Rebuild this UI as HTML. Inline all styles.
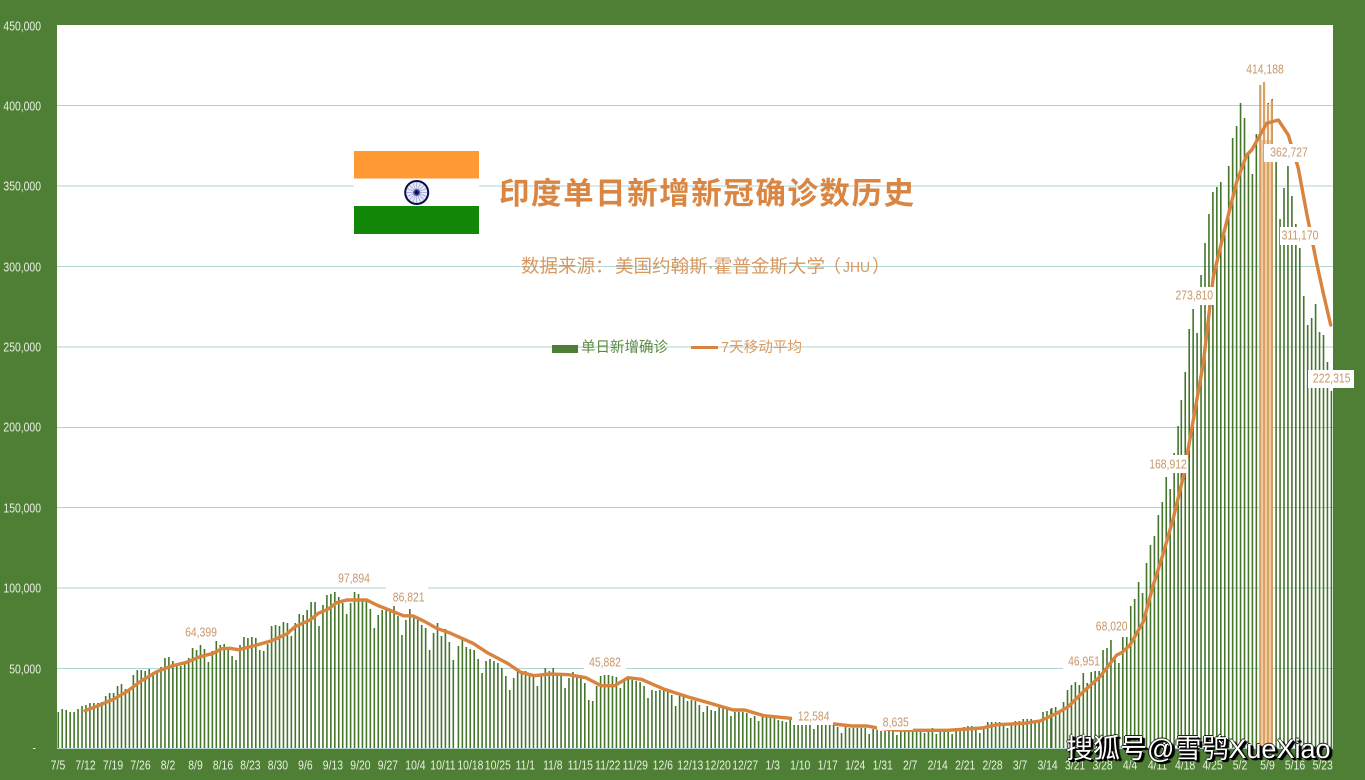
<!DOCTYPE html>
<html lang="zh">
<head>
<meta charset="utf-8">
<title>印度单日新增新冠确诊数历史</title>
<style>
html,body{margin:0;padding:0;background:#4f7f35;width:1365px;height:780px;overflow:hidden}
svg{position:absolute;left:0;top:0;display:block}
text{font-family:"Liberation Sans","Noto Sans CJK SC",sans-serif}
.a text{font-size:13px;fill:#e8f0e0;text-anchor:middle}
.y text{font-size:13px;fill:#e8f0e0;text-anchor:end}
.d text{font-size:13px;fill:#c8976a;text-anchor:middle}
#wm{position:absolute;left:1066px;top:731px;font:27px/36px "Liberation Sans","Noto Sans CJK SC",sans-serif;color:#fff;white-space:nowrap;text-shadow:1px 1px 0 #000,2px 2px 0 #000,3px 2px 1px #000,-1px 0 0 #222,0 -1px 0 #222}
</style>
</head>
<body>
<svg width="1365" height="780" viewBox="0 0 1365 780" xmlns="http://www.w3.org/2000/svg">
<rect x="57" y="25" width="1276" height="724" fill="#fff"/>
<path d="M57 105.5H1333M57 186H1333M57 266.5H1333M57 347H1333M57 427.5H1333M57 507.5H1333M57 588H1333M57 668.5H1333M57 748.5H1333" stroke="#b0d4d0" stroke-width="1" fill="none"/>
<path fill="none" stroke="#44752b" stroke-width="1.6" d="M58.3 712V748m3.95-39V748m3.95-38V748m3.95-36V748m3.95-36V748m3.95-39V748m3.95-42V748m3.95-43V748m3.95-45V748m3.95-45V748m3.95-45V748m3.95-46V748m3.95-52V748m3.95-55V748m3.95-55V748m3.95-62V748m3.95-64V748m3.95-59V748m3.95-60V748m3.95-73V748m3.95-78V748m3.95-78V748m3.95-77V748m3.95-79V748m3.95-76V748m3.95-75V748m3.95-81V748m3.95-90V748m3.95-91V748m3.95-87V748m3.95-82V748m3.95-82V748m3.95-85V748m3.95-90V748m3.95-100V748m3.95-98V748m3.95-103V748m3.95-99V748m3.95-86V748m3.95-97V748m3.95-107V748m3.95-103V748m3.95-104V748m3.95-100V748m3.95-92V748m3.95-88V748m3.95-103V748m3.95-111V748m3.95-110V748m3.95-111V748m3.95-110V748m3.95-98V748m3.95-97V748m3.95-104V748m3.95-122V748m3.95-123V748m3.95-122V748m3.95-126V748m3.95-125V748m3.95-112V748m3.95-125V748m3.95-134V748m3.95-133V748m3.95-138V748m3.95-146V748m3.95-146V748m3.95-122V748m3.95-143V748m3.95-153V748m3.95-154V748m3.95-156V748m3.95-151V748m3.95-145V748m3.95-134V748m3.95-145V748m3.95-156V748m3.95-154V748m3.95-147V748m3.95-149V748m3.95-139V748m3.95-120V748m3.95-133V748m3.95-138V748m3.95-138V748m3.95-136V748m3.95-142V748m3.95-132V748m3.95-113V748m3.95-128V748m3.95-139V748m3.95-130V748m3.95-128V748m3.95-123V748m3.95-120V748m3.95-98V748m3.95-115V748m3.95-125V748m3.95-112V748m3.95-119V748m3.95-106V748m3.95-88V748
M458.4 646V748m3.95-108V748m3.95-101V748m3.95-99V748m3.95-98V748m3.95-89V748m3.95-75V748m3.95-87V748m3.95-89V748m3.95-87V748m3.95-85V748m3.95-80V748m3.95-72V748m3.95-58V748m3.95-70V748m3.95-77V748m3.95-77V748m3.95-77V748m3.95-72V748m3.95-72V748m3.95-62V748m3.95-72V748m3.95-80V748m3.95-77V748m3.95-80V748m3.95-75V748m3.95-74V748m3.95-60V748m3.95-70V748m3.95-76V748m3.95-71V748m3.95-70V748m3.95-65V748m3.95-48V748m3.95-47V748m3.95-62V748m3.95-72V748m3.95-73V748m3.95-73V748m3.95-72V748m3.95-71V748m3.95-60V748m3.95-67V748m3.95-71V748m3.95-68V748m3.95-67V748m3.95-66V748m3.95-62V748m3.95-50V748m3.95-58V748m3.95-57V748m3.95-58V748m3.95-58V748m3.95-57V748m3.95-53V748m3.95-42V748m3.95-52V748m3.95-51V748m3.95-47V748m3.95-48V748m3.95-47V748m3.95-43V748m3.95-36V748m3.95-42V748m3.95-38V748m3.95-37V748m3.95-42V748m3.95-41V748m3.95-40V748m3.95-32V748m3.95-36V748m3.95-36V748m3.95-36V748m3.95-35V748m3.95-30V748m3.95-32V748m3.95-27V748m3.95-32V748m3.95-32V748m3.95-31V748m3.95-30V748m3.95-28V748m3.95-27V748m3.95-26V748m3.95-28V748m3.95-23V748m3.95-23V748m3.95-23V748m3.95-23V748m3.95-23V748m3.95-19V748m3.95-23V748m3.95-23V748m3.95-23V748m3.95-23V748m3.95-23V748m3.95-21V748m3.95-15V748m3.95-21V748m3.95-20V748m3.95-20V748m3.95-20V748m3.95-20V748m3.95-20V748m3.95-14V748m3.95-19V748m3.95-20V748m3.95-17V748m3.95-17V748m3.95-17V748m3.95-17V748m3.95-13V748m3.95-17V748m3.95-18V748m3.95-18V748m3.95-18V748m3.95-18V748m3.95-18V748m3.95-15V748m3.95-17V748m3.95-20V748m3.95-14V748m3.95-17V748m3.95-17V748m3.95-17V748m3.95-14V748m3.95-20V748m3.95-20V748m3.95-21V748m3.95-22V748m3.95-22V748m3.95-20V748m3.95-15V748m3.95-22V748m3.95-26V748m3.95-26V748m3.95-26V748m3.95-26V748m3.95-23V748m3.95-20V748m3.95-23V748m3.95-27V748m3.95-27V748m3.95-29V748m3.95-29V748m3.95-29V748m3.95-27V748m3.95-28V748m3.95-36V748m3.95-37V748m3.95-39V748
M1051.7 708V748m3.95-41V748m3.95-35V748m3.95-46V748m3.95-58V748m3.95-63V748m3.95-66V748m3.95-63V748m3.95-75V748m3.95-65V748m3.95-76V748m3.95-79V748m3.95-79V748m3.95-98V748m3.95-100V748m3.95-108V748m3.95-90V748m3.95-85V748m3.95-112V748m3.95-112V748m3.95-142V748m3.95-149V748m3.95-166V748m3.95-155V748m3.95-185V748m3.95-203V748m3.95-212V748m3.95-233V748m3.95-246V748m3.95-271V748m3.95-259V748m3.95-295V748m3.95-322V748
M1181.3 400V748m3.95-376V748m3.95-419V748m3.95-439V748m3.95-415V748m3.95-473V748m3.95-505V748m3.95-534V748m3.95-556V748m3.95-561V748m3.95-566V748m3.95-513V748m3.95-582V748m3.95-610V748m3.95-622V748m3.95-645V748m3.95-630V748m3.95-595V748m3.95-574V748m3.95-614V748m3.95-663V748m3.95-666V748m3.95-645V748m3.95-649V748m3.95-589V748m3.95-529V748m3.95-560V748m3.95-582V748m3.95-552V748m3.95-524V748m3.95-500V748m3.95-452V748m3.95-423V748m3.95-430V748m3.95-444V748m3.95-416V748m3.95-413V748m3.95-386V748m3.95-357V748"/>
<rect x="1259" y="140" width="13.5" height="608" fill="#f3d4ad"/>
<path d="M1260.2 85V748M1264 82V748M1268 104V748M1271.8 100V748" stroke="#d9a264" stroke-width="2.2" fill="none"/>
<path fill="none" stroke="#d8843f" stroke-width="3.4" stroke-linejoin="round" stroke-linecap="round" d="M85 710.7L100 705 113.3 699.3 126.7 691.7 140 681.7 156.7 671.7 171.7 666 186.7 662.3 200 656.7 213.3 653.3 221.7 648.7 230 648.3 238.3 649.7 253.3 646 271.7 640.7 286.7 634 295 626.7 310 620 318.3 613.3 328.3 609 336.7 602.7 346.7 600 366.7 600 376.7 605 391.7 611 403.3 615.7 413.3 616 425 621.7 436.7 628.3 450 633 473 643.3 488.3 653.3 507.4 663.3 520.8 672.3 534.2 675.7 549.5 674 568.6 674.7 585.9 677.7 601.2 685.7 614.6 685.7 628 677.7 641.4 679.3 664.3 689.3 687.3 696.7 710.2 703.3 733.2 710 744.7 710 763.8 715.7 790.6 718.3 812 721 833.9 724 851.8 726 867.1 726 876 727.7 895 730 913 730.3 947.5 730.3 982 728 997.3 724.7 1024 723.3 1040 721 1056.7 713.3 1068.3 706.7 1083.3 691.7 1100 676.7 1116.7 655 1121.7 652.7 1130 645 1143.3 621.7 1153.3 585 1163.3 553.3 1173.3 518.3 1183.3 476.7 1193.3 420 1203.3 363.3 1213.3 276.7 1223.3 235 1236.7 181.7 1246.7 155 1251.7 150 1266.7 123.3 1278.3 120 1288.3 135 1298.3 168.3 1306.7 213.3 1316.7 263.3 1323.3 293.3 1330.7 325"/>
<g fill="#fff">
<rect x="386" y="586" width="42" height="20"/>
<rect x="584" y="651" width="42" height="21"/>
<rect x="792" y="705" width="41" height="20"/>
<rect x="877" y="711" width="36" height="19"/>
<rect x="1063" y="650" width="39" height="21"/>
<rect x="1092" y="616" width="38" height="21"/>
<rect x="1148" y="455" width="40" height="18"/>
<rect x="1175" y="287" width="40" height="18"/>
<rect x="1264" y="144" width="44" height="18"/>
<rect x="1280" y="227" width="40" height="18"/>
<rect x="1308" y="370" width="46" height="18"/>
</g>
<g class="d">
<text transform="translate(201 636.5) scale(.8 1)">64,399</text>
<text transform="translate(354 582.5) scale(.8 1)">97,894</text>
<text transform="translate(408.7 601.5) scale(.8 1)">86,821</text>
<text transform="translate(605 666.5) scale(.8 1)">45,882</text>
<text transform="translate(813.6 720.5) scale(.8 1)">12,584</text>
<text transform="translate(895.8 726.5) scale(.8 1)">8,635</text>
<text transform="translate(1084 665.5) scale(.8 1)">46,951</text>
<text transform="translate(1111.7 630.5) scale(.8 1)">68,020</text>
<text transform="translate(1168 468.5) scale(.8 1)">168,912</text>
<text transform="translate(1194.3 299.5) scale(.8 1)">273,810</text>
<text transform="translate(1265 73.5) scale(.8 1)">414,188</text>
<text transform="translate(1289 156.5) scale(.8 1)">362,727</text>
<text transform="translate(1300 239.5) scale(.8 1)">311,170</text>
<text transform="translate(1331.7 382.5) scale(.8 1)">222,315</text>
</g>
<g class="y">
<text transform="translate(41 30.5) scale(.8 1)">450,000</text>
<text transform="translate(41 110.5) scale(.8 1)">400,000</text>
<text transform="translate(41 190.5) scale(.8 1)">350,000</text>
<text transform="translate(41 271.5) scale(.8 1)">300,000</text>
<text transform="translate(41 351.5) scale(.8 1)">250,000</text>
<text transform="translate(41 431.5) scale(.8 1)">200,000</text>
<text transform="translate(41 512.5) scale(.8 1)">150,000</text>
<text transform="translate(41 592.5) scale(.8 1)">100,000</text>
<text transform="translate(41 673.5) scale(.8 1)">50,000</text>
<text transform="translate(36 752) scale(.8 1)">-</text>
</g>
<g class="a">
<text transform="translate(58 769.5) scale(.8 1)">7/5</text>
<text transform="translate(85.5 769.5) scale(.8 1)">7/12</text>
<text transform="translate(113 769.5) scale(.8 1)">7/19</text>
<text transform="translate(140.5 769.5) scale(.8 1)">7/26</text>
<text transform="translate(168 769.5) scale(.8 1)">8/2</text>
<text transform="translate(195.5 769.5) scale(.8 1)">8/9</text>
<text transform="translate(223 769.5) scale(.8 1)">8/16</text>
<text transform="translate(250.4 769.5) scale(.8 1)">8/23</text>
<text transform="translate(277.9 769.5) scale(.8 1)">8/30</text>
<text transform="translate(305.4 769.5) scale(.8 1)">9/6</text>
<text transform="translate(332.9 769.5) scale(.8 1)">9/13</text>
<text transform="translate(360.4 769.5) scale(.8 1)">9/20</text>
<text transform="translate(387.9 769.5) scale(.8 1)">9/27</text>
<text transform="translate(415.4 769.5) scale(.8 1)">10/4</text>
<text transform="translate(442.9 769.5) scale(.8 1)">10/11</text>
<text transform="translate(470.4 769.5) scale(.8 1)">10/18</text>
<text transform="translate(497.8 769.5) scale(.8 1)">10/25</text>
<text transform="translate(525.3 769.5) scale(.8 1)">11/1</text>
<text transform="translate(552.8 769.5) scale(.8 1)">11/8</text>
<text transform="translate(580.3 769.5) scale(.8 1)">11/15</text>
<text transform="translate(607.8 769.5) scale(.8 1)">11/22</text>
<text transform="translate(635.3 769.5) scale(.8 1)">11/29</text>
<text transform="translate(662.8 769.5) scale(.8 1)">12/6</text>
<text transform="translate(690.3 769.5) scale(.8 1)">12/13</text>
<text transform="translate(717.8 769.5) scale(.8 1)">12/20</text>
<text transform="translate(745.2 769.5) scale(.8 1)">12/27</text>
<text transform="translate(772.7 769.5) scale(.8 1)">1/3</text>
<text transform="translate(800.2 769.5) scale(.8 1)">1/10</text>
<text transform="translate(827.7 769.5) scale(.8 1)">1/17</text>
<text transform="translate(855.2 769.5) scale(.8 1)">1/24</text>
<text transform="translate(882.7 769.5) scale(.8 1)">1/31</text>
<text transform="translate(910.2 769.5) scale(.8 1)">2/7</text>
<text transform="translate(937.7 769.5) scale(.8 1)">2/14</text>
<text transform="translate(965.2 769.5) scale(.8 1)">2/21</text>
<text transform="translate(992.6 769.5) scale(.8 1)">2/28</text>
<text transform="translate(1020.1 769.5) scale(.8 1)">3/7</text>
<text transform="translate(1047.6 769.5) scale(.8 1)">3/14</text>
<text transform="translate(1075.1 769.5) scale(.8 1)">3/21</text>
<text transform="translate(1102.6 769.5) scale(.8 1)">3/28</text>
<text transform="translate(1130.1 769.5) scale(.8 1)">4/4</text>
<text transform="translate(1157.6 769.5) scale(.8 1)">4/11</text>
<text transform="translate(1185.1 769.5) scale(.8 1)">4/18</text>
<text transform="translate(1212.6 769.5) scale(.8 1)">4/25</text>
<text transform="translate(1240 769.5) scale(.8 1)">5/2</text>
<text transform="translate(1267.5 769.5) scale(.8 1)">5/9</text>
<text transform="translate(1295 769.5) scale(.8 1)">5/16</text>
<text transform="translate(1322.7 769.5) scale(.8 1)">5/23</text>
</g>
<rect x="354" y="151" width="125" height="83" fill="#fff"/>
<rect x="354" y="151" width="125" height="27.5" fill="#ff9933"/>
<rect x="354" y="206" width="125" height="28" fill="#138808"/>
<circle cx="416.7" cy="192.5" r="11.5" fill="#e8eaf6" stroke="#0a0a50" stroke-width="2"/>
<path d="M416.7 182V203M406.2 192.5H427.2M409.3 185.1L424.1 199.9M409.3 199.9L424.1 185.1M412.7 182.8L420.7 202.2M420.7 182.8L412.7 202.2M407 188.5L426.4 196.5M407 196.5L426.4 188.5" stroke="#9aa0d4" stroke-width=".7"/>
<circle cx="416.7" cy="192.5" r="3.6" fill="#5a60b0"/>
<circle cx="416.7" cy="192.5" r="2.2" fill="#0a0a60"/>
<text x="499" y="204" font-size="30.5" font-weight="700" fill="#da8542" textLength="415" lengthAdjust="spacing">印度单日新增新冠确诊数历史</text>
<text x="521" y="272.5" font-size="18.5" fill="#d8975e" textLength="92.5" lengthAdjust="spacing">数据来源：</text>
<text x="615" y="272.5" font-size="18" fill="#d8975e" textLength="210" lengthAdjust="spacingAndGlyphs">美国约翰斯·霍普金斯大学</text>
<text x="823" y="272.5" font-size="18" fill="#d8975e">（</text>
<text x="843" y="272" font-size="15" fill="#d8975e" textLength="27" lengthAdjust="spacingAndGlyphs">JHU</text>
<text x="872" y="272.5" font-size="18" fill="#d8975e">）</text>
<rect x="552" y="345" width="26" height="8" fill="#4f7f35"/>
<text x="581" y="352" font-size="14.5" fill="#5b8a3e" textLength="87" lengthAdjust="spacing">单日新增确诊</text>
<rect x="691" y="346" width="27" height="3" fill="#d8843f"/>
<text x="721" y="352" font-size="14.5" fill="#d99b62" textLength="81" lengthAdjust="spacing">7天移动平均</text>
</svg>
<div id="wm">搜狐号@雪鸮XueXiao</div>
</body>
</html>
